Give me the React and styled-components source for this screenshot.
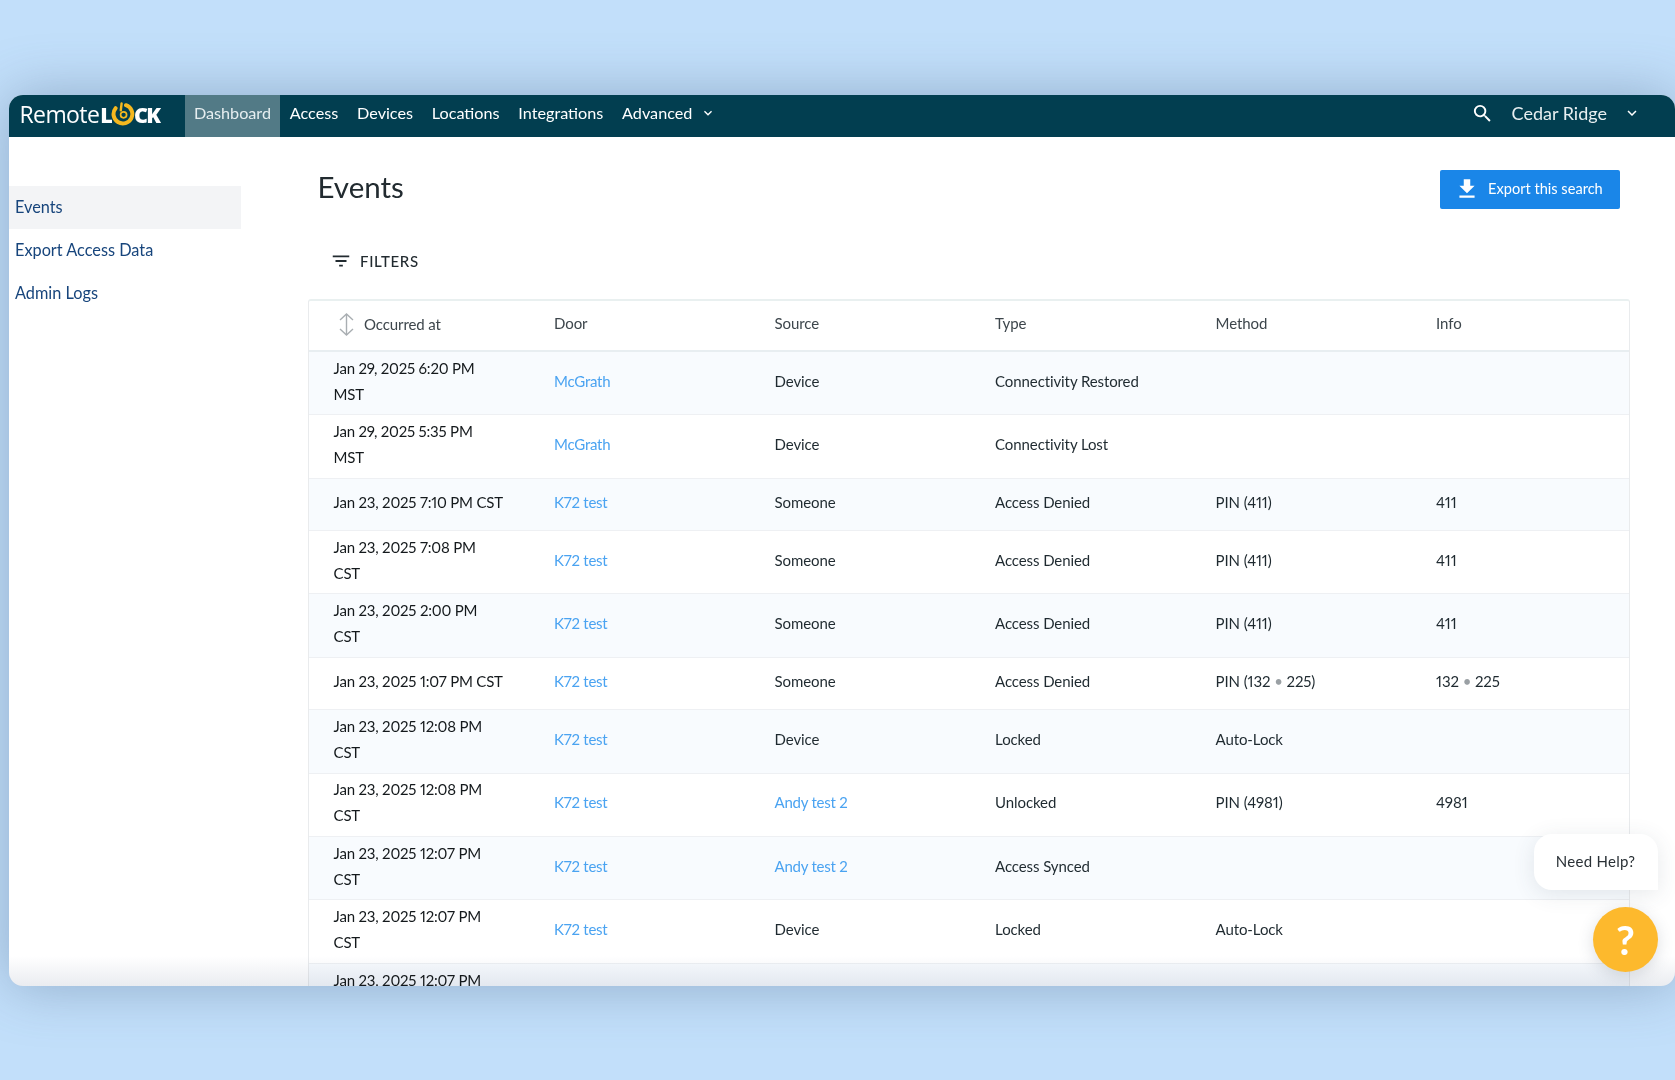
import React from "react";
import styled, { createGlobalStyle } from "styled-components";
import { MdSearch, MdFilterList, MdFileDownload, MdExpandMore } from "react-icons/md";

const GlobalStyle = createGlobalStyle`
  * { box-sizing: border-box; }
  html, body { margin: 0; padding: 0; }
  body {
    background: #c2dffa;
    font-family: "Lato", "Noto Sans", sans-serif;
    font-variant-numeric: proportional-nums;
    color: #1f2a30;
  }
`;

const NAV_ITEMS = ["Access", "Devices", "Locations", "Integrations"];
const SIDE_ITEMS = ["Events", "Export Access Data", "Admin Logs"];

const ROWS = [
  { time: ["Jan 29, 2025 6:20 PM", "MST"], door: "McGrath", source: "Device", type: "Connectivity Restored" },
  { time: ["Jan 29, 2025 5:35 PM", "MST"], door: "McGrath", source: "Device", type: "Connectivity Lost" },
  { time: ["Jan 23, 2025 7:10 PM CST"], door: "K72 test", source: "Someone", type: "Access Denied", method: "PIN (411)", info: "411" },
  { time: ["Jan 23, 2025 7:08 PM", "CST"], door: "K72 test", source: "Someone", type: "Access Denied", method: "PIN (411)", info: "411" },
  { time: ["Jan 23, 2025 2:00 PM", "CST"], door: "K72 test", source: "Someone", type: "Access Denied", method: "PIN (411)", info: "411" },
  { time: ["Jan 23, 2025 1:07 PM CST"], door: "K72 test", source: "Someone", type: "Access Denied", pin: true },
  { time: ["Jan 23, 2025 12:08 PM", "CST"], door: "K72 test", source: "Device", type: "Locked", method: "Auto-Lock" },
  { time: ["Jan 23, 2025 12:08 PM", "CST"], door: "K72 test", source: "Andy test 2", sourceLink: true, type: "Unlocked", method: "PIN (4981)", info: "4981" },
  { time: ["Jan 23, 2025 12:07 PM", "CST"], door: "K72 test", source: "Andy test 2", sourceLink: true, type: "Access Synced" },
  { time: ["Jan 23, 2025 12:07 PM", "CST"], door: "K72 test", source: "Device", type: "Locked", method: "Auto-Lock" },
  { time: ["Jan 23, 2025 12:07 PM", "CST"], door: "K72 test", source: "Device", type: "Locked", method: "Auto-Lock" },
];

const Logo = () => (
  <LogoWrap>
    <LogoThin>Remote</LogoThin>
    <LogoBold>L</LogoBold>
    <svg width="24" height="24" viewBox="0 0 24 24" fill="none">
      <path d="M15 3.2A9.4 9.4 0 1 1 4.6 6.2" stroke="#f5b81f" strokeWidth="4" strokeLinecap="round" />
      <path d="M10.6 1.5 L9.8 8.4" stroke="#f5b81f" strokeWidth="2.4" strokeLinecap="round" />
      <circle cx="12.6" cy="12.8" r="3" stroke="#f5b81f" strokeWidth="1.7" />
    </svg>
    <LogoBold>CK</LogoBold>
  </LogoWrap>
);

const SortIcon = () => (
  <svg width="15" height="23" viewBox="0 0 15 23" fill="none" stroke="#a9aeb2" strokeWidth="1.4">
    <path d="M1 7 L7.5 1 L14 7" />
    <path d="M1 16 L7.5 22 L14 16" />
    <path d="M7.5 1 V22" />
  </svg>
);

const PinValue = () => (
  <>
    132 <Dot>•</Dot> 225
  </>
);

export default function App() {
  return (
    <>
      <GlobalStyle />
      <Page>
        <Card>
          <NavBar>
            <Logo />
            <NavTab $active>Dashboard</NavTab>
            {NAV_ITEMS.map((item) => (
              <NavTab key={item}>{item}</NavTab>
            ))}
            <NavTab>
              Advanced
              <MdExpandMore size={16} />
            </NavTab>
            <NavRight>
              <MdSearch size={23} />
              <Account>Cedar Ridge</Account>
              <MdExpandMore size={18} />
            </NavRight>
          </NavBar>

          <Body>
            <Sidebar>
              {SIDE_ITEMS.map((item, i) => (
                <SideItem key={item} $active={i === 0}>
                  {item}
                </SideItem>
              ))}
            </Sidebar>

            <Content>
              <TitleRow>
                <Title>Events</Title>
                <ExportButton>
                  <MdFileDownload size={26} />
                  Export this search
                </ExportButton>
              </TitleRow>

              <Filters>
                <MdFilterList size={22} />
                FILTERS
              </Filters>

              <Table>
                <HeadRow>
                  <SortHead>
                    <SortIcon />
                    Occurred at
                  </SortHead>
                  <span>Door</span>
                  <span>Source</span>
                  <span>Type</span>
                  <span>Method</span>
                  <span>Info</span>
                </HeadRow>
                {ROWS.map((row, i) => (
                  <Row key={i} $tinted={i % 2 === 0}>
                    <div>
                      {row.time.map((line) => (
                        <TimeLine key={line}>{line}</TimeLine>
                      ))}
                    </div>
                    <Link>{row.door}</Link>
                    {row.sourceLink ? <Link>{row.source}</Link> : <span>{row.source}</span>}
                    <span>{row.type}</span>
                    <span>
                      {row.pin ? (
                        <>
                          PIN (<PinValue />)
                        </>
                      ) : (
                        row.method
                      )}
                    </span>
                    <span>{row.pin ? <PinValue /> : row.info}</span>
                  </Row>
                ))}
              </Table>
            </Content>
          </Body>

          <BottomFade />

          <HelpWidget>
            <HelpBubble>Need Help?</HelpBubble>
            <HelpButton>?</HelpButton>
          </HelpWidget>
        </Card>
      </Page>
    </>
  );
}

const Page = styled.div`
  height: 1080px;
  padding: 95px 0 0 8.5px;
  overflow: hidden;
`;

const Card = styled.div`
  position: relative;
  height: 890.5px;
  display: flex;
  flex-direction: column;
  background: #fff;
  border-radius: 14px;
  overflow: hidden;
  box-shadow: 0 0 56px rgba(70, 95, 130, 0.4);
`;

const NavBar = styled.nav`
  flex: none;
  height: 41.5px;
  display: flex;
  align-items: stretch;
  background: #023e50;
  color: #fff;
  font-size: 16.2px;
`;

const LogoWrap = styled.div`
  width: 176px;
  padding: 0 0 3px 11px;
  display: flex;
  align-items: center;
  color: #fff;
  font-size: 23px;
  line-height: 1;

  svg {
    margin: 0 -1px 1px 0;
  }
`;

const LogoThin = styled.span`
  font-family: "Open Sans", sans-serif;
  font-weight: 400;
  letter-spacing: -0.6px;
  margin-right: 1px;
`;

const LogoBold = styled.span`
  font-family: "Open Sans", sans-serif;
  font-size: 21.5px;
  font-weight: 800;
  letter-spacing: -1.8px;
`;

const NavTab = styled.div`
  display: flex;
  align-items: center;
  gap: 8px;
  height: 100%;
  padding: 0 9.4px 6px;
  background: ${(p) => (p.$active ? "#527a86" : "transparent")};
  color: ${(p) => (p.$active ? "#e6eef0" : "#fff")};
`;

const NavRight = styled.div`
  margin-left: auto;
  display: flex;
  align-items: center;
  padding: 0 34px 5px 0;

  svg:last-child {
    margin-left: 16px;
  }
`;

const Account = styled.span`
  margin-left: 18px;
  font-size: 18px;
  color: #e8eff1;
`;

const Body = styled.div`
  flex: 1;
  min-height: 0;
  display: grid;
  grid-template-columns: 232.5px 1fr;
`;

const Sidebar = styled.aside`
  padding-top: 49.5px;
`;

const SideItem = styled.div`
  height: 43px;
  padding: 0 0 3px 6.5px;
  display: flex;
  align-items: center;
  background: ${(p) => (p.$active ? "#f3f4f6" : "transparent")};
  color: #17457c;
  font-size: 16.3px;
`;

const Content = styled.main`
  padding: 33.5px 45px 0 67px;
`;

const TitleRow = styled.div`
  height: 59.5px;
  padding: 0 10.5px 0 9.5px;
  display: flex;
  align-items: flex-start;
  justify-content: space-between;
`;

const Title = styled.h1`
  margin: -1px 0 0;
  font-size: 29.5px;
  font-weight: 400;
  line-height: 36px;
  color: #222b30;
`;

const ExportButton = styled.button`
  width: 179.5px;
  height: 38.5px;
  padding: 0 0 2px 14px;
  display: flex;
  align-items: center;
  gap: 8px;
  border: none;
  border-radius: 2px;
  background: #1a86e8;
  color: #fff;
  font-family: inherit;
  font-size: 14.6px;

  svg {
    margin-top: 2px;
  }
`;

const Filters = styled.div`
  height: 51px;
  padding: 20.5px 0 0 22px;
  display: flex;
  align-items: flex-start;
  gap: 8px;
  font-size: 15px;
  font-weight: 500;
  line-height: 22px;
  letter-spacing: 0.65px;
  color: #222b30;
`;

const Table = styled.div`
  margin-top: 18.5px;
  border: 1px solid #e9ebed;
  border-top: 2px solid #e9f0f0;
  border-bottom: none;
  border-radius: 3px 3px 0 0;
  font-size: 15px;
  line-height: 26px;
  letter-spacing: -0.1px;
`;

const HeadRow = styled.div`
  height: 51px;
  padding: 0 0 5px 24.6px;
  display: grid;
  grid-template-columns: repeat(5, 220.5px) 1fr;
  align-items: center;
  border-bottom: 2px solid #e8eef1;
  color: #3d464c;
`;

const SortHead = styled.div`
  display: flex;
  align-items: center;
  gap: 10px;
  padding-left: 5.4px;
  margin-top: 2px;
`;

const Row = styled.div`
  min-height: 52.3px;
  padding: 2.8px 0 7.6px 24.6px;
  display: grid;
  grid-template-columns: repeat(5, 220.5px) 1fr;
  align-items: center;
  background: ${(p) => (p.$tinted ? "#f8fbfe" : "#fff")};
  border-bottom: 1px solid #eef0f3;
`;

const TimeLine = styled.div`
  color: #14191c;
  letter-spacing: -0.2px;
`;

const Link = styled.span`
  color: #4aa3f1;
  letter-spacing: -0.25px;
`;

const Dot = styled.span`
  color: #9aa0a4;
`;

const BottomFade = styled.div`
  position: absolute;
  left: 0;
  right: 0;
  bottom: 0;
  height: 30px;
  background: linear-gradient(#fff, #eaecf0);
  mix-blend-mode: multiply;
`;

const HelpWidget = styled.div`
  position: absolute;
  right: 17px;
  bottom: 13.5px;
  display: flex;
  flex-direction: column;
  align-items: flex-end;
  gap: 17px;
`;

const HelpBubble = styled.div`
  width: 124px;
  height: 56px;
  padding: 0 1px 2px 0;
  display: flex;
  align-items: center;
  justify-content: center;
  background: #fff;
  border-radius: 18px 18px 0 18px;
  box-shadow: 0 4px 22px rgba(60, 70, 90, 0.12);
  font-size: 15px;
  letter-spacing: 0.3px;
  color: #2a3136;
`;

const HelpButton = styled.div`
  width: 65px;
  height: 65px;
  display: flex;
  align-items: center;
  justify-content: center;
  border-radius: 50%;
  background: #fdb92d;
  box-shadow: 0 4px 16px rgba(60, 70, 90, 0.18);
  color: #fff;
  font-size: 41px;
  font-weight: 700;
`;
